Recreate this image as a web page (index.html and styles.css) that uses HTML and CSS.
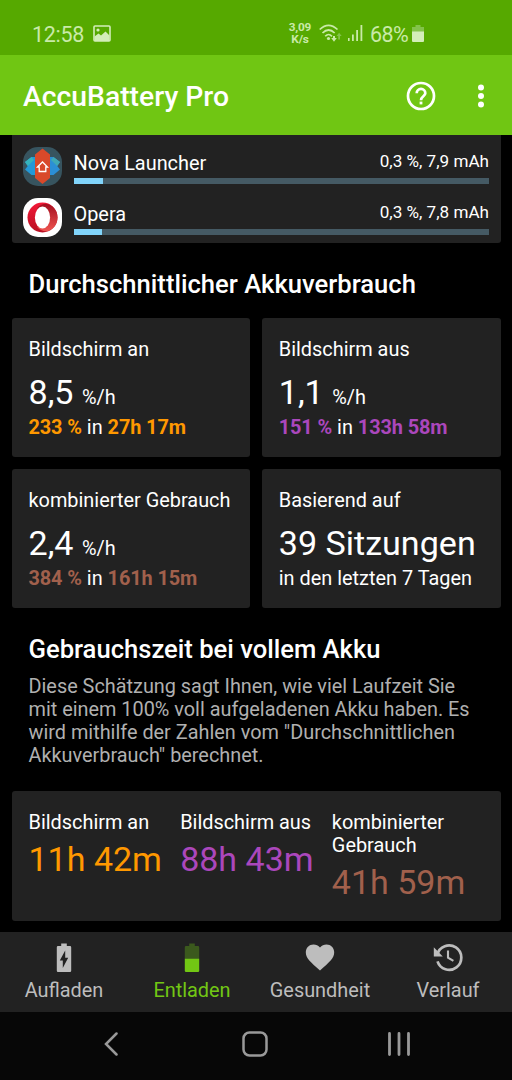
FILE: index.html
```html
<!DOCTYPE html>
<html lang="de">
<head>
<meta charset="utf-8">
<title>AccuBattery Pro</title>
<link rel="stylesheet" href="styles.css">
</head>
<body>
<div class="screen">
  <header class="status">
    <span class="clock">12:58</span>
    <svg class="picture" width="18" height="17" viewBox="0 0 18 17"><rect x="1" y="1" width="16" height="15" rx="1" fill="none" stroke="#d3edb9" stroke-width="1.6"/><path d="M1.500 11.500 5.500 8.500 8 10.500 12.500 6.500 16.500 10.500V16H1.500Z" fill="#d3edb9"/><circle cx="5" cy="5" r="1.600" fill="#d3edb9"/></svg>
    <span class="speed"><span>3,09</span><span>K/s</span></span>
    <svg class="wifi" width="23" height="19" viewBox="0 0 23 19"><g fill="none" stroke="#c9eaa8" stroke-width="1.700"><path d="M.700 5.500Q9.500-2.800 18.500 5.500"/><path d="M3.500 9Q9.500 3 15.700 9"/><path d="M6.200 12.300Q9.500 8.700 13 12.300"/></g><circle cx="9.500" cy="14.500" r="1.600" fill="#c9eaa8"/><path d="M14 12h2v2h1.800L15 17.800 12.200 14H14Z" fill="#c9eaa8"/><path d="M19.200 15.500v-3.500h-1.700l2.600-3.200 2.600 3.200H21v3.500Z" fill="#83c34a"/></svg>
    <svg class="signal" width="15" height="17" viewBox="0 0 15 17"><path d="M0 13h1.600v3H0ZM4 9.500h1.800V16H4ZM8.200 5H10v11H8.200ZM12.500 0h1.800v16h-1.800Z" fill="#c9eaa8"/></svg>
    <span class="percent">68%</span>
    <svg class="cell" width="12" height="18" viewBox="0 0 12 18"><path d="M3.500 0h5v2H12v5H0V2h3.500Z" fill="#83c34a"/><path d="M0 6.500h12V16q0 1-1 1H1q-1 0-1-1Z" fill="#d3edb9"/></svg>
  </header>

  <div class="appbar">
    <h1>AccuBattery Pro</h1>
    <svg class="help" width="30" height="30" viewBox="0 0 30 30"><circle cx="15" cy="15" r="13" fill="none" stroke="#fff" stroke-width="2.700"/><path d="M10.700 12.200a4.300 4.300 0 1 1 8.600 0c0 3-4.300 3.100-4.300 7" fill="none" stroke="#fff" stroke-width="2.700"/><path d="M13.600 20.600h2.800v2.800h-2.800Z" fill="#fff"/></svg>
    <svg class="more" width="8" height="24" viewBox="0 0 8 24"><g fill="#fff"><circle cx="4" cy="3.500" r="3"/><circle cx="4" cy="12" r="3"/><circle cx="4" cy="20.500" r="3"/></g></svg>
  </div>

  <main class="content">
    <section class="card apps">
      <div class="app">
        <svg class="app-icon" width="39" height="39" viewBox="0 0 39 39"><rect width="39" height="39" rx="15" fill="#37545f"/><path d="M2 15 8.500 10H12v18H8.500L2 22.500 4.800 19Z" fill="#2399d8"/><path d="M37 15 30.500 10H27v18h3.500l6.500-5.500-2.800-3.500Z" fill="#2b8fd6"/><path d="M2 15 8.500 10 11 13 4.800 19Z" fill="#35b4bd"/><path d="M37 15 30.500 10 28 13l6.200 6Z" fill="#3fa9b5"/><path d="M19.500 1.500 27 7.500v23.500l-7.500 6L12 31V7.500Z" fill="#d9492a"/><path d="m14.500 20 5-5 5 5h-1.700v4.500h-6.600V20Z" fill="none" stroke="#fff" stroke-width="1.300"/></svg>
        <div class="usage">
          <div class="usage-text"><span class="name">Nova Launcher</span><span class="amount">0,3 %, 7,9 mAh</span></div>
          <div class="track"><div class="fill" style="width:7%"></div></div>
        </div>
      </div>
      <div class="app">
        <svg class="app-icon" width="39" height="39" viewBox="0 0 39 39"><defs><linearGradient id="ring" x1="0" x2="0" y1="0" y2="1"><stop offset="0" stop-color="#f31837"/><stop offset="1" stop-color="#b80f22"/></linearGradient><linearGradient id="shade" x1="0" x2="0" y1="0" y2="1"><stop offset="0" stop-color="#a40e1f"/><stop offset="1" stop-color="#ef5550"/></linearGradient></defs><rect width="39" height="39" rx="15" fill="#fff"/><circle cx="19.500" cy="19.500" r="15" fill="url(#ring)"/><path d="M14.500 9.500Q22 2.500 29.600 8.500Q34.500 13 34.500 19.500T29.600 30.500Q22 36.500 14.500 29.500Z" fill="url(#shade)"/><ellipse cx="19.500" cy="19.500" rx="7.600" ry="11" fill="#fff"/></svg>
        <div class="usage">
          <div class="usage-text"><span class="name">Opera</span><span class="amount">0,3 %, 7,8 mAh</span></div>
          <div class="track"><div class="fill" style="width:6.800%"></div></div>
        </div>
      </div>
    </section>

    <h2>Durchschnittlicher Akkuverbrauch</h2>
    <section class="stats">
      <article class="card stat"><p class="label">Bildschirm an</p><p class="value">8,5 <small>%/h</small></p><p class="detail on"><b>233 %</b> in <b>27h 17m</b></p></article>
      <article class="card stat"><p class="label">Bildschirm aus</p><p class="value">1,1 <small>%/h</small></p><p class="detail off"><b>151 %</b> in <b>133h 58m</b></p></article>
      <article class="card stat"><p class="label">kombinierter Gebrauch</p><p class="value">2,4 <small>%/h</small></p><p class="detail combined"><b>384 %</b> in <b>161h 15m</b></p></article>
      <article class="card stat"><p class="label">Basierend auf</p><p class="value">39 Sitzungen</p><p class="detail">in den letzten 7 Tagen</p></article>
    </section>

    <h2 class="full-title">Gebrauchszeit bei vollem Akku</h2>
    <p class="description">Diese Schätzung sagt Ihnen, wie viel Laufzeit Sie<br>mit einem 100% voll aufgeladenen Akku haben. Es<br>wird mithilfe der Zahlen vom "Durchschnittlichen<br>Akkuverbrauch" berechnet.</p>
    <section class="card runtimes">
      <div><p class="label">Bildschirm an</p><p class="time on-time">11h 42m</p></div>
      <div><p class="label">Bildschirm aus</p><p class="time off-time">88h 43m</p></div>
      <div><p class="label">kombinierter Gebrauch</p><p class="time combined-time">41h 59m</p></div>
    </section>
  </main>

  <nav class="tabs">
    <div class="tab"><svg width="30" height="30" viewBox="0 0 30 30"><path d="M12.200.500h5.600V3H21q1.200 0 1.200 1.200v23.600Q22.200 29 21 29H9q-1.200 0-1.200-1.200V4.200Q7.800 3 9 3h3.200Z" fill="#bdbdbd"/><path d="M16.200 7.500v7.200h3L13.800 25v-7.500h-3Z" fill="#222"/></svg><span>Aufladen</span></div>
    <div class="tab active"><svg width="30" height="30" viewBox="0 0 30 30"><path d="M12.200.500h5.600V3H21q1.200 0 1.200 1.200V16H7.800V4.200Q7.800 3 9 3h3.200Z" fill="#3b591d"/><path d="M7.800 15.700h14.400v12.100Q22.200 29 21 29H9q-1.200 0-1.200-1.200Z" fill="#72c714"/></svg><span>Entladen</span></div>
    <div class="tab"><svg width="30" height="30" viewBox="0 0 30 30"><path d="M15 27.500C5.500 19 .800 15.500.800 9.300.800 4.800 4.200 1.500 8.500 1.500c2.500 0 5 1.200 6.500 3.100 1.500-1.900 4-3.100 6.500-3.100 4.300 0 7.700 3.300 7.700 7.800 0 6.200-4.700 9.700-14.200 18.200Z" fill="#bdbdbd"/></svg><span>Gesundheit</span></div>
    <div class="tab"><svg width="30" height="30" viewBox="0 0 30 30"><path d="M4.300 11.500A12.200 12.200 0 1 1 4.500 18.400" fill="none" stroke="#bdbdbd" stroke-width="2.700"/><path d="M.800 4.200V13.500H9.800Z" fill="#bdbdbd"/><path d="M15 7.600v7l5.400 3.200" fill="none" stroke="#bdbdbd" stroke-width="2.100"/></svg><span>Verlauf</span></div>
  </nav>
  <footer class="system-nav">
    <svg class="back" width="14" height="24" viewBox="0 0 14 24"><path d="M12.500 1.500 2 12l10.500 10.500" fill="none" stroke="#999" stroke-width="2.500" stroke-linecap="round"/></svg>
    <svg class="home" width="26" height="26" viewBox="0 0 26 26"><rect x="1.500" y="1.500" width="23" height="23" rx="6" fill="none" stroke="#999" stroke-width="2.500"/></svg>
    <svg class="recents" width="24" height="24" viewBox="0 0 24 24"><path d="M2.500 1.500v21M12 1.500v21M21.500 1.500v21" stroke="#999" stroke-width="2.800" stroke-linecap="round"/></svg>
  </footer>
</div>
</body>
</html>
```
FILE: styles.css
```css
* { box-sizing: border-box; }
body { margin: 0; background: #000; color: #fff; font-family: Roboto, sans-serif; }
h1, h2, p { margin: 0; }
svg { display: block; flex: none; }
.screen { width: 512px; height: 1080px; display: flex; flex-direction: column; overflow: hidden; }
.status { height: 55px; flex: none; background: #56a900; color: #c9eaa8; display: flex; align-items: center; padding: 12px 87px 0 32px; font-size: 21.500px; }
.clock { width: 61px; padding-top: 1px; letter-spacing: -.3px; }
.speed { width: 24px; margin-left: 177px; display: flex; flex-direction: column; align-items: center; font-size: 11.800px; line-height: 11.500px; font-weight: 700; letter-spacing: -.2px; }
.wifi { margin-left: 7px; }
.signal { margin-left: 6px; }
.percent { width: 39px; margin-left: 7px; padding-top: 1px; letter-spacing: -.6px; }
.cell { margin-left: 3px; }
.appbar { height: 80px; flex: none; background: #70c613; display: flex; align-items: center; padding: 1px 27px 0 23px; }
h1 { font-size: 28.300px; font-weight: 500; line-height: 34px; margin-right: auto; padding-top: 2px; }
.help { margin-right: 41px; }
.content { height: 797px; flex: none; padding: 0 11.500px; }
.card { background: #222; border-radius: 3px; }
.apps { height: 108px; padding: 12px 11.500px 0 11px; border-radius: 0 0 3px 3px; }
.app { height: 51px; display: flex; gap: 12px; }
.usage { flex: 1; }
.usage-text { height: 31px; display: flex; justify-content: space-between; padding-top: 4px; }
.name { font-size: 19.900px; line-height: 24px; padding-top: 1px; }
.amount { font-size: 17.100px; line-height: 20px; }
.track { height: 6px; background: #455a64; }
.fill { height: 6px; background: #81d4fa; }
h2 { font-size: 25.600px; line-height: 30px; font-weight: 500; padding-left: 17px; margin-top: 26px; }
.stats { display: grid; grid-template-columns: 1fr 1fr; gap: 11.500px; margin-top: 18.500px; }
.stat { height: 139.500px; padding: 20px 17px 0; white-space: nowrap; }
.label { font-size: 19.900px; line-height: 23.300px; }
.value { font-size: 34.100px; line-height: 40px; margin-top: 11px; }
.value small { font-size: 19.900px; line-height: 20px; }
.detail { font-size: 19.900px; line-height: 23.300px; margin-top: 4.700px; }
.detail b { letter-spacing: -.1px; }
.on b, .on-time { color: #ff9800; }
.off b, .off-time { color: #ab47bc; }
.combined b, .combined-time { color: #a1604c; }
.description { color: #b0b0b0; font-size: 19.880px; line-height: 23.250px; padding-left: 17px; margin-top: 10.500px; white-space: nowrap; }
.runtimes { height: 130px; margin-top: 23.300px; padding: 20px 17px 0; display: grid; grid-template-columns: repeat(3, 1fr); }
.time { font-size: 34px; line-height: 40px; margin-top: 5px; white-space: nowrap; }
.tabs { height: 80px; flex: none; background: #222; color: #bdbdbd; display: grid; grid-template-columns: repeat(4, 1fr); }
.tab { display: flex; flex-direction: column; align-items: center; padding-top: 11px; font-size: 19.900px; line-height: 24px; }
.tab span { margin-top: 6px; }
.active { color: #72c714; }
.system-nav { height: 68px; background: #070707; display: grid; grid-template-columns: 138px 26px 143px; align-items: center; padding: 0 0 4px 104px; }
.recents { justify-self: end; }
```
